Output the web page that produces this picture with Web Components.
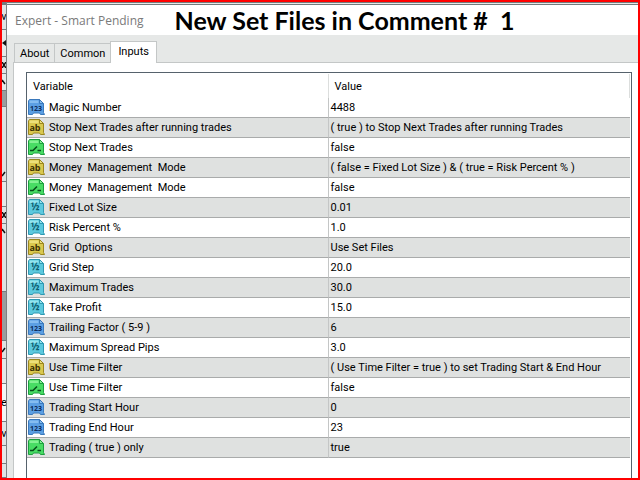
<!DOCTYPE html>
<html lang="en">
<head>
<meta charset="utf-8">
<title>Expert - Smart Pending</title>
<style>
  html, body { height: 100%; margin: 0; }
  body { font-family: Roboto, "Liberation Sans", sans-serif; font-size: 11px; color: #000; }
</style>
</head>
<body>
<screen-frame>
  <window-edge slot="edge"></window-edge>
  <expert-dialog caption="Expert - Smart Pending">
    <span slot="headline">New Set Files in Comment #  1</span>
    <dialog-tabs slot="tabs" tabs="About,Common,Inputs" selected="Inputs"></dialog-tabs>
    <inputs-table></inputs-table>
  </expert-dialog>
</screen-frame>

<script>
window.customElements.define(
  "screen-frame",
  class extends HTMLElement {
    constructor() {
      super();
      const root = this.attachShadow({ mode: "open" });
      root.innerHTML = `
    <style>
      :host {
        display: grid;
        grid-template-columns: 5px minmax(0, 1fr);
        box-sizing: border-box;
        height: 100vh;
        overflow: hidden;
        border: 2px solid #f00;
      }
    </style>
    <slot name="edge"></slot>
    <slot></slot>
    `;
    }
  }
);

// sliver of the terminal that shows beside the dialog
window.customElements.define(
  "window-edge",
  class extends HTMLElement {
    constructor() {
      super();
      const root = this.attachShadow({ mode: "open" });
      const marks = {
        left: `<path d="M4 0V6L0 3Z" fill="#111"/>`,
        close: `<path d="M0 0L4 6M4 0L0 6" stroke="#111" stroke-width="1.5"/>`,
        up: `<path d="M0 1L3 5" stroke="#111" stroke-width="1.5"/>`,
        down: `<path d="M0 5L3 1" stroke="#111" stroke-width="1.5"/>`
      };
      const parts = [
        [25, "v", "#dfe3e3"],
        [27, "left", "#e6e8e7"],
        [17, "close", "#dfe3e3"],
        [17, "up", "#e6e8e7"],
        [16, "", "#9a9d9e"],
        [75, "down", "#dfe1e1", "end"],
        [25, "", "#e6e8e7"],
        [17, "close", "#dfe3e3"],
        [68, "up", "#dfe1e1", "start"],
        [49, "", "#9a9d9e"],
        [18, "down", "#dfe1e1"],
        [25, "", "#e6e8e7"],
        [38, "e", "#f4f5f5"],
        [24, "v", "#dfe3e3"],
        [18, "", "#e6e8e7"],
        [0, "", "#dfe3e3", "grow"]
      ];

      root.innerHTML = `
    <style>
      :host {
        display: flex;
        flex-direction: column;
        overflow: hidden;
        padding-top: 3px;
        background: #747a7c;
        border-right: 1px solid #7d8182;
        box-sizing: border-box;
        line-height: 14px;
      }
      span {
        display: flex;
        flex: none;
        align-items: center;
        justify-content: center;
        overflow: hidden;
        box-sizing: border-box;
        border-bottom: 1px solid #777c7e;
      }
      svg { flex: none; margin: 4px 0; fill: none; }
      .end { align-items: flex-end; }
      .start { align-items: flex-start; }
      .grow { flex: 1; }
    </style>
    ${parts
      .map(([height, mark, fill, place = ""]) => {
        const content = marks[mark]
          ? `<svg width="4" height="6" aria-hidden="true">${marks[mark]}</svg>`
          : mark;
        return `<span class="${place}" style="height: ${height}px; background: ${fill}">${content}</span>`;
      })
      .join("")}
    `;
    }
  }
);

window.customElements.define(
  "expert-dialog",
  class extends HTMLElement {
    constructor() {
      super();
      const root = this.attachShadow({ mode: "open" });
      root.innerHTML = `
    <style>
      :host {
        display: flex;
        flex-direction: column;
        min-height: 0;
        background: #e6e8e7;
        border-top: 3px double #747a7c;
      }
      header {
        display: flex;
        align-items: center;
        gap: 31px;
        height: 30px;
        flex: none;
        padding-left: 8px;
        background: #fff;
        white-space: pre;
      }
      .caption {
        font-family: "Open Sans", "Noto Sans", sans-serif;
        font-size: 12px;
        color: #7a7a7a;
      }
      ::slotted([slot="headline"]) {
        font-family: Lato, sans-serif;
        font-size: 25px;
        font-weight: 700;
        line-height: 30px;
      }
      .body {
        display: flex;
        flex-direction: column;
        flex: 1;
        min-height: 0;
        padding: 7px 0 0 6px;
      }
      main {
        flex: 1;
        min-height: 0;
        display: flex;
        background: #fff;
        border: solid #c4c7c7;
        border-width: 1px 0 0 1px;
        padding: 9px 6px 0 12px;
      }
    </style>
    <header>
      <span class="caption"></span>
      <slot name="headline"></slot>
    </header>
    <div class="body">
      <slot name="tabs"></slot>
      <main><slot></slot></main>
    </div>
    `;
    }

    connectedCallback() {
      this.shadowRoot.querySelector(".caption").textContent = this.getAttribute("caption");
    }
  }
);

window.customElements.define(
  "dialog-tabs",
  class extends HTMLElement {
    constructor() {
      super();
      this.attachShadow({ mode: "open" });
    }

    connectedCallback() {
      const root = this.shadowRoot;
      const selected = this.getAttribute("selected");

      root.innerHTML = `
    <style>
      :host {
        display: flex;
        align-items: flex-end;
        height: 20px;
        flex: none;
        padding-left: 1px;
      }
      button {
        height: 19px;
        margin: 0;
        padding: 0 5px;
        border: 1px solid #c4c7c7;
        border-bottom: 0;
        margin-right: -1px;
        background: #e6e8e7;
        font: inherit;
        color: inherit;
      }
      button[aria-selected="true"] {
        height: 22px;
        padding: 0 7px 3px;
        margin-bottom: -1px;
        background: #fff;
        z-index: 1;
      }
    </style>
    ${this.getAttribute("tabs")
      .split(",")
      .map(tab => `<button type="button" role="tab" aria-selected="${tab === selected}">${tab}</button>`)
      .join("")}
    `;
      this.setAttribute("role", "tablist");

      const buttons = root.querySelectorAll("button");
      buttons.forEach(button => {
        button.addEventListener("click", () => {
          buttons.forEach(b => b.setAttribute("aria-selected", b === button));
        });
      });
    }
  }
);

const ICONS = {
  int: {
    fill: "#5b9fe3", light: "#85bdf0", edge: "#3a78bb", ink: "#0b2d5c",
    mark: `<text x="8" y="12" font-size="7">123</text>`
  },
  string: {
    fill: "#d9c84e", light: "#ece07a", edge: "#9a8620", ink: "#3c3000",
    mark: `<text x="7" y="12" font-size="9">ab</text>`
  },
  bool: {
    fill: "#48dc64", light: "#84f193", edge: "#1d9e40", ink: "#064d1b",
    mark: `<path d="M2 11.5H5L9 7.5M9.5 11.5H13" fill="none" stroke="#064d1b" stroke-width="1.5"/>`
  },
  double: {
    fill: "#5cc9de", light: "#93e4ef", edge: "#2f98b2", ink: "#0b5a6c",
    mark: `<text x="7" y="11" font-size="10">½</text>`
  }
};

window.customElements.define(
  "type-icon",
  class extends HTMLElement {
    constructor() {
      super();
      this.attachShadow({ mode: "open" });
    }

    connectedCallback() {
      const icon = ICONS[this.getAttribute("type")];
      this.shadowRoot.innerHTML = `
    <style>
      :host { display: block; flex: none; width: 17px; height: 17px; white-space: normal; }
      svg { display: block; }
      text { font-family: "Open Sans", sans-serif; font-weight: 700; text-anchor: middle; }
    </style>
    <svg width="17" height="17" viewBox="0 0 17 17" aria-hidden="true">
      <path d="M1.5 .5H11.5L15.5 4.5V13.5L16.5 15.5H12.5L11.5 14H5.5L4.5 15.5H.5V2Z" fill="${icon.fill}" stroke="${icon.edge}"/>
      <path d="M1.5 4V1.5H10.5V4Z" fill="${icon.light}"/>
      <path d="M11.5 .5V4.5H15.5Z" fill="${icon.light}" stroke="${icon.edge}"/>
      <g fill="${icon.ink}">${icon.mark}</g>
    </svg>
    `;
    }
  }
);

window.customElements.define(
  "inputs-table",
  class extends HTMLElement {
    constructor() {
      super();
      const root = this.attachShadow({ mode: "open" });
      const rows = [
        ["int", "Magic Number", "4488"],
        ["string", "Stop Next Trades after running trades", "( true ) to Stop Next Trades after running Trades"],
        ["bool", "Stop Next Trades", "false"],
        ["string", "Money  Management  Mode", "( false = Fixed Lot Size ) &amp; ( true = Risk Percent % )"],
        ["bool", "Money  Management  Mode", "false"],
        ["double", "Fixed Lot Size", "0.01"],
        ["double", "Risk Percent %", "1.0"],
        ["string", "Grid  Options", "Use Set Files"],
        ["double", "Grid Step", "20.0"],
        ["double", "Maximum Trades", "30.0"],
        ["double", "Take Profit", "15.0"],
        ["int", "Trailing Factor ( 5-9 )", "6"],
        ["double", "Maximum Spread Pips", "3.0"],
        ["string", "Use Time Filter", "( Use Time Filter = true ) to set Trading Start &amp; End Hour"],
        ["bool", "Use Time Filter", "false"],
        ["int", "Trading Start Hour", "0"],
        ["int", "Trading End Hour", "23"],
        ["bool", "Trading ( true ) only", "true"]
      ];

      root.innerHTML = `
    <style>
      :host {
        display: block;
        flex: 1;
        min-width: 0;
        border: solid #56626c;
        border-width: 1px 1px 0;
        padding: 1px 1px 0 0;
      }
      table {
        width: 100%;
        table-layout: fixed;
        border-collapse: separate;
        border-spacing: 0;
        white-space: pre;
      }
      th, td {
        box-sizing: border-box;
        padding: 0 2px;
        text-align: left;
        font-weight: 400;
        line-height: 19px;
        overflow: hidden;
      }
      th { height: 24px; padding: 0 6px; border-right: 1px solid #dcdedd; }
      td { height: 20px; border-bottom: 1px solid #a9abab; }
      th:first-child, td:first-child { width: 50%; }
      td:first-child { padding-left: 1px; border-right: 1px solid #c4c6c6; }
      tr:nth-child(even) td { background: #dfe1e0; }
      .name { display: flex; align-items: center; gap: 4px; height: 19px; }
    </style>
    <table>
      <thead>
        <tr><th>Variable</th><th>Value</th></tr>
      </thead>
      <tbody>
        ${rows
          .map(
            ([type, name, value]) =>
              `<tr><td><div class="name"><type-icon type="${type}"></type-icon><span>${name}</span></div></td><td>${value}</td></tr>`
          )
          .join("")}
      </tbody>
    </table>
    `;
    }
  }
);
</script>
</body>
</html>
